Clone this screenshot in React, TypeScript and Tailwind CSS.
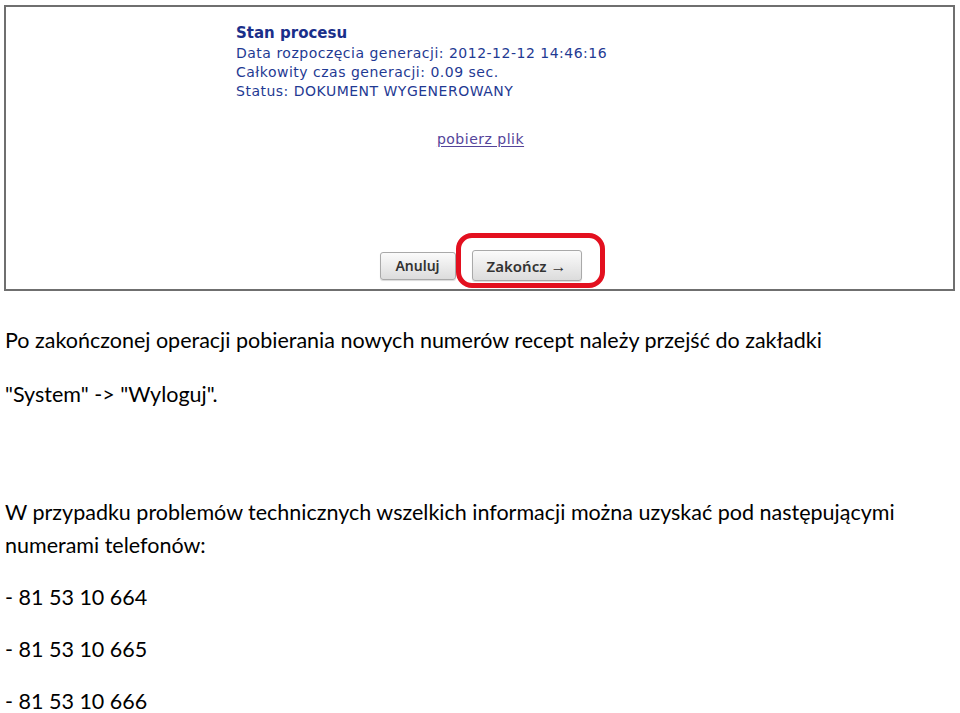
const BODY = "font-['Lato',_'Noto_Sans',_sans-serif] text-[21.5px] text-black";

const PHONES = ["- 81 53 10 664", "- 81 53 10 665", "- 81 53 10 666"];

function Screenshot() {
  return (
    <div className="ml-[4px] mt-[5px] h-[286px] w-[951px] border-2 border-[#6f6f6f] bg-white font-['DejaVu_Sans',_'Verdana',_sans-serif] text-[#1f3a93]">
      <div className="pl-[230px] pt-[16px]">
        <p className="text-[15px] font-bold leading-[20px] text-[#1a2f8a]">Stan procesu</p>
        <p className="text-[14px] leading-[20px] tracking-[0.5px]">Data rozpoczęcia generacji: 2012-12-12 14:46:16</p>
        <p className="text-[14px] leading-[19px] tracking-[0.5px]">Całkowity czas generacji: 0.09 sec.</p>
        <p className="text-[14px] leading-[19px] tracking-[0.5px]">Status: DOKUMENT WYGENEROWANY</p>
      </div>
      <div className="mt-[28px] flex justify-center pl-[2px]">
        <a className="text-[14px] tracking-[0.5px] text-[#54449a] underline underline-offset-2">pobierz plik</a>
      </div>
      <div className="mt-[100px] flex items-center justify-center gap-[16px] pl-[2px] font-['Noto_Sans',_sans-serif] font-semibold text-[#333]">
        <button className="h-[28px] w-[76px] rounded-[3px] border border-[#a9a9a9] bg-gradient-to-b from-[#fbfbfb] to-[#dcdcdc] text-[14px] shadow-[0_1px_1px_rgba(0,0,0,0.15)]">
          Anuluj
        </button>
        <div className="relative">
          <button className="h-[31px] w-[110px] rounded-[3px] border border-[#a9a9a9] bg-gradient-to-b from-[#fbfbfb] to-[#dcdcdc] text-[15px] shadow-[0_1px_1px_rgba(0,0,0,0.15)]">
            Zakończ <span className="text-[16px]">→</span>
          </button>
          <div className="pointer-events-none absolute -left-[16px] -right-[23px] -top-[17px] -bottom-[7px] rounded-[16px] border-[5px] border-[#e3101f]" />
        </div>
      </div>
    </div>
  );
}

export default function App() {
  return (
    <div className="h-[713px] w-[960px] overflow-hidden bg-white">
      <Screenshot />
      <div className={`${BODY} pl-[5px] pt-[35px]`}>
        <p className="leading-[28px]">
          Po zakończonej operacji pobierania nowych numerów recept należy przejść do zakładki
        </p>
        <p className="mt-[26px] leading-[28px]">"System" -&gt; "Wyloguj".</p>
        <p className="mt-[88px] leading-[33px]">
          W przypadku problemów technicznych wszelkich informacji można uzyskać pod następującymi
          <br />
          numerami telefonów:
        </p>
        {PHONES.map((p) => (
          <p key={p} className="mt-[19px] leading-[33px]">
            {p}
          </p>
        ))}
      </div>
    </div>
  );
}
